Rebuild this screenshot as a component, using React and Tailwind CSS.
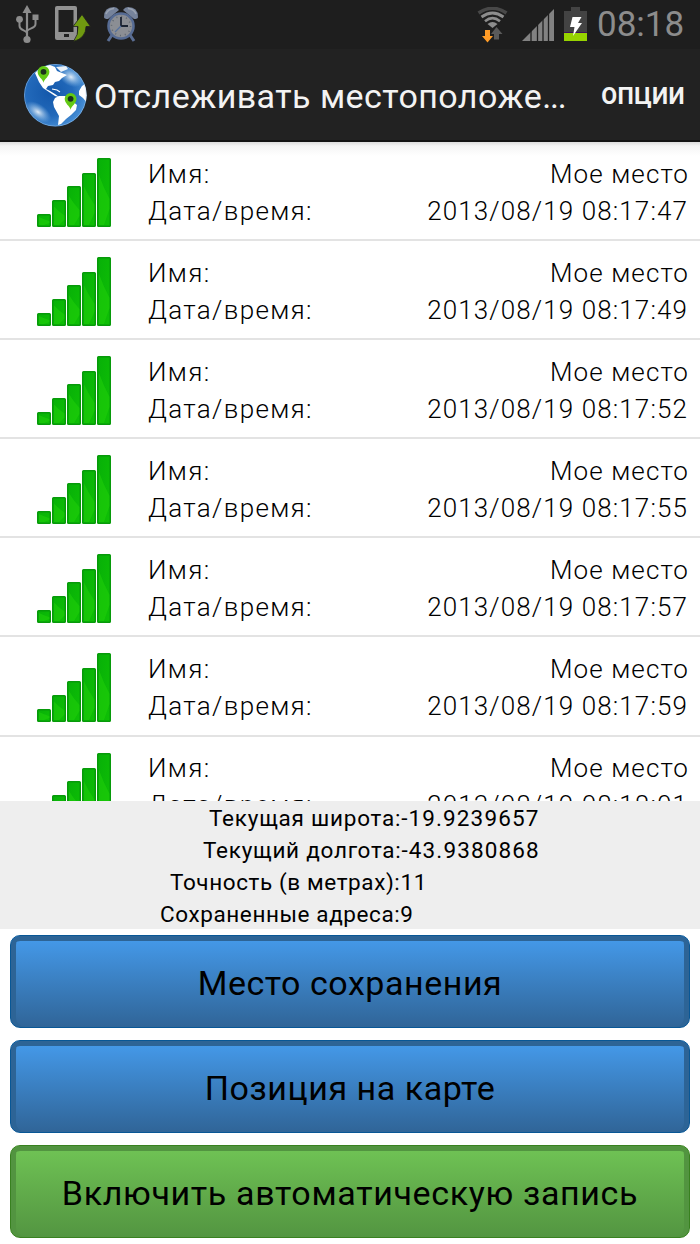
const places = [
  { id: 1, name: "Мое место", date: "2013/08/19 08:17:47" },
  { id: 2, name: "Мое место", date: "2013/08/19 08:17:49" },
  { id: 3, name: "Мое место", date: "2013/08/19 08:17:52" },
  { id: 4, name: "Мое место", date: "2013/08/19 08:17:55" },
  { id: 5, name: "Мое место", date: "2013/08/19 08:17:57" },
  { id: 6, name: "Мое место", date: "2013/08/19 08:17:59" },
  { id: 7, name: "Мое место", date: "2013/08/19 08:18:01" },
];

function UsbIcon() {
  return (
    <svg width="26" height="40" viewBox="0 0 26 40" fill="none">
      <path d="M12 34V8" stroke="#8c8c8c" strokeWidth="2.2" />
      <path d="M12 1L16.500 9H7.500z" fill="#8c8c8c" />
      <path
        d="M12 29C11 26 4.500 26.500 4.500 22V15M12 27C13 24 20.500 25 20.500 20V12"
        stroke="#8c8c8c"
        strokeWidth="2"
      />
      <circle cx="4.500" cy="15.300" r="3.400" fill="#8c8c8c" />
      <rect x="17.500" y="10.500" width="6" height="5.500" fill="#8c8c8c" />
      <circle cx="12" cy="35.500" r="3.600" fill="#8c8c8c" />
    </svg>
  );
}

function UploadIcon() {
  return (
    <svg width="36" height="36" viewBox="0 0 36 36" fill="none">
      <path d="M0 2Q0 0 2 0H20Q22 0 22 2V34H2Q0 34 0 32z" fill="#929292" />
      <path d="M3.500 4H18.500V26H3.500z" fill="#1e1e1e" />
      <rect x="9" y="28" width="5" height="3" fill="#222" />
      <path
        d="M27 8.500L35.500 20.500H31Q31 32 18.500 35.500Q23.500 29 23 20.500H18z"
        fill="#6f9a10"
        stroke="#1e1e1e"
        strokeWidth="0.800"
      />
    </svg>
  );
}

function AlarmIcon() {
  return (
    <svg width="36" height="38" viewBox="0 0 36 38" fill="none">
      <path d="M9 30L5 36M27 30L31 36" stroke="#5a6d92" strokeWidth="3" />
      <path d="M1 12Q1 2 11 2Q14 2 16 5L5 14Q1 14 1 12z" fill="#76839b" />
      <path d="M35 12Q35 2 25 2Q22 2 20 5L31 14Q35 14 35 12z" fill="#76839b" />
      <path d="M3 9Q5 4 11 3.500M33 9Q31 4 25 3.500" stroke="#9aa3b1" strokeWidth="1.500" />
      <circle cx="18" cy="21" r="12.500" fill="#8b8e94" stroke="#566b93" strokeWidth="2.600" />
      <circle
        cx="18"
        cy="21"
        r="9.500"
        stroke="#5f666f"
        strokeWidth="1.500"
        strokeDasharray="1 3.970"
      />
      <path d="M18 12V21H25" stroke="#1b2433" strokeWidth="1.800" />
      <path d="M18 21L12 27" stroke="#55719f" strokeWidth="1.200" />
    </svg>
  );
}

function WifiIcon() {
  return (
    <svg width="32" height="36" viewBox="0 0 32 36" fill="none">
      <path d="M1.500 6Q15.500 -3.500 29.500 6" stroke="#484848" strokeWidth="3.400" />
      <path d="M4.500 10Q15.500 2 26.500 10" stroke="#8d8d8d" strokeWidth="2.800" />
      <path d="M8 14.200Q15.500 8 23 14.200" stroke="#8d8d8d" strokeWidth="2.600" />
      <path d="M10.500 17Q15.500 12.800 20.500 17L15.500 21z" fill="#8d8d8d" />
      <path d="M19.500 20L25.500 27H22V32.500H17V27H14z" fill="#5a5a5a" />
      <path d="M8 23H13V29H16L10.500 35.500L5 29H8z" fill="#ff9c27" />
    </svg>
  );
}

function CellSignalIcon() {
  return (
    <svg width="33" height="33" viewBox="0 0 33 33">
      <path d="M0 32L32 0V32z" fill="#828282" />
      <path d="M9 20V33M15.500 14V33M21 8V33M26.500 2V33" stroke="#1e1e1e" strokeWidth="1.300" />
    </svg>
  );
}

function BatteryIcon() {
  return (
    <svg width="24" height="35" viewBox="0 0 24 35">
      <path d="M7 0H16V4H23V34H0V4H7z" fill="#434343" />
      <rect y="26" width="23" height="8" fill="#97d300" />
      <rect y="25" width="23" height="1" fill="#3d1159" />
      <path d="M8.500 10H17.500L14 16H18L9 29L10.500 20H6z" fill="#fff" />
    </svg>
  );
}

function Pin({ x, y }) {
  return (
    <g transform={`translate(${x} ${y})`}>
      <path
        d="M0 11C-0.800 7 -5.900 5 -5.900 0A5.900 5.900 0 0 1 5.900 0C5.900 5 0.800 7 0 11z"
        fill="#62c914"
      />
      <circle r="2.900" fill="#1c331c" />
    </g>
  );
}

function GlobeIcon() {
  return (
    <svg width="64" height="64" viewBox="0 0 64 64" className="shrink-0">
      <defs>
        <radialGradient id="sea" cx="0.400" cy="0.450" r="0.600">
          <stop offset="0" stopColor="#1458ab" />
          <stop offset="0.600" stopColor="#2269ba" />
          <stop offset="1" stopColor="#4c93d8" />
        </radialGradient>
        <radialGradient id="shine">
          <stop offset="0" stopColor="#fff" stopOpacity="0.850" />
          <stop offset="1" stopColor="#9fd0f5" stopOpacity="0" />
        </radialGradient>
        <clipPath id="disc">
          <circle cx="31.300" cy="31.300" r="31.300" />
        </clipPath>
      </defs>
      <g clipPath="url(#disc)">
        <rect width="64" height="64" fill="url(#sea)" />
        <ellipse cx="47" cy="13" rx="13" ry="9" fill="url(#shine)" transform="rotate(30 47 13)" />
        <ellipse cx="14" cy="48" rx="15" ry="8" fill="url(#shine)" transform="rotate(35 14 48)" />
        <path
          d="M11 9L17 3L26 1L31 3L33 7L38 9L43 11L38 14L35 17L31 18L29 21L24 22L22 25L26 27L31 30L35 33L31 32L25 28L19 24L15 18Z"
          fill="#fff"
        />
        <path d="M32 3L42 2L44 5L37 8z" fill="#fff" fillOpacity="0.900" />
        <path
          d="M31 34L35 32L41 32L48 37L53 41L52 46L47 51L42 55L37 60L34 61L35 52L30 43L29 38Z"
          fill="#fff"
        />
        <path d="M58 22L64 18V40L59 34L55 31L55 27z" fill="#fff" />
        <path d="M28 25L33 26L36 28" stroke="#fff" strokeWidth="1.100" fill="none" />
        <circle
          cx="31.300"
          cy="31.300"
          r="30.900"
          fill="none"
          stroke="#b7d3ee"
          strokeOpacity="0.450"
        />
      </g>
      <Pin x={19.5} y={7.8} />
      <Pin x={46.6} y={34.8} />
    </svg>
  );
}

function SignalBars() {
  const bars = [
    [0, 56],
    [15, 42],
    [30, 28],
    [45, 15],
    [60, 0],
  ];
  return (
    <svg width="75" height="69" viewBox="0 0 75 69">
      <defs>
        <linearGradient id="bar" x1="0" y1="0" x2="1" y2="1">
          <stop offset="0" stopColor="#07b008" />
          <stop offset="1" stopColor="#0fc005" />
        </linearGradient>
      </defs>
      {bars.map(([x, y]) => (
        <g key={x}>
          <rect
            x={x + 0.75}
            y={y + 0.75}
            width="12.500"
            height={67.5 - y}
            rx="0.800"
            fill="url(#bar)"
            stroke="#079a0a"
            strokeWidth="1.500"
          />
          <path
            d={`M${x + 2} ${y + (68 - y) * 0.25}Q${x + 6} ${y + (68 - y) * 0.42} ${x + 12.5} ${y + (68 - y) * 0.6}V${y + (68 - y) * 0.75}L${x + 7} 67H${x + 2}z`}
            fill="#25d40a"
            fillOpacity="0.450"
          />
        </g>
      ))}
    </svg>
  );
}

function StatusBar() {
  return (
    <div className="flex h-[49px] items-start bg-[#1e1e1e] pl-[15px]">
      <div className="pt-1">
        <UsbIcon />
      </div>
      <div className="pt-1.5 pl-3.5">
        <UploadIcon />
      </div>
      <div className="pt-[5px] pl-3">
        <AlarmIcon />
      </div>
      <div className="ml-auto pt-[7px]">
        <WifiIcon />
      </div>
      <div className="pt-[9px] pl-[13px]">
        <CellSignalIcon />
      </div>
      <div className="pt-[7px] pl-[9px]">
        <BatteryIcon />
      </div>
      <div className="w-[112px] pt-px pl-[9px] text-[35px] leading-[48px] text-[#8c8c8c]">
        08:18
      </div>
    </div>
  );
}

function PlaceRow({ place }) {
  return (
    <li className="flex h-[99.100px] shrink-0 border-b-2 border-[#e3e3e3] pr-[11px] pl-[37px] text-[26px] leading-[37px] font-light text-black">
      <div className="w-[111px] pt-4">
        <SignalBars />
      </div>
      <div className="grow pt-[13.500px]">
        <div className="flex justify-between">
          <span className="tracking-[1.400px]">Имя:</span>
          <span className="tracking-[1.100px]">{place.name}</span>
        </div>
        <div className="flex justify-between">
          <span className="tracking-[1.350px]">Дата/время:</span>
          <span className="pr-px tracking-[1.100px]">{place.date}</span>
        </div>
      </div>
    </li>
  );
}

export default function App() {
  return (
    <div className="flex h-[1244px] w-[700px] flex-col overflow-hidden bg-white font-[Roboto,sans-serif]">
      <StatusBar />
      <header className="flex h-[93px] shrink-0 items-center border-b-2 border-[#141414] bg-[#222] pt-[3px] pr-[15px] pl-6 text-[#f3f3f3]">
        <GlobeIcon />
        <h1 className="pt-px pl-1.5 text-[34px] tracking-[0.450px]">
          Отслеживать местоположе<span className="tracking-[-1.200px]">...</span>
        </h1>
        <span className="ml-auto pt-0.5 text-[23px] font-bold tracking-[0.400px]">ОПЦИИ</span>
      </header>

      <ul className="flex h-[659px] shrink-0 flex-col overflow-hidden bg-[linear-gradient(#dcdcdc,#f5f5f5_4px,#fff_14px)]">
        {places.map((place) => (
          <PlaceRow key={place.id} place={place} />
        ))}
      </ul>

      <div className="h-32 shrink-0 bg-[#eee] pt-px text-[22.500px] leading-8 text-black">
        <p className="pl-[209px] tracking-[0.770px]">
          Текущая широта:<span className="tracking-[1.120px]">-19.9239657</span>
        </p>
        <p className="pl-[203px] tracking-[0.740px]">
          Текущий долгота:<span className="tracking-[1.120px]">-43.9380868</span>
        </p>
        <p className="pl-[170px] tracking-[0.600px]">Точность (в метрах):11</p>
        <p className="pl-[160px] tracking-[0.600px]">Сохраненные адреса:9</p>
      </div>

      <div className="flex flex-col gap-3 px-2.5 pt-1.5 text-[34px] text-black">
        <button className="h-[93px] rounded-[10px] border border-[#085796] bg-linear-to-b from-[#459bec] to-[#306598] pt-1 tracking-[0.550px] shadow-[inset_0_5px_0_#2d6496,inset_5px_0_0_#2d6496,inset_-5px_0_0_#2d6496]">
          Место сохранения
        </button>
        <button className="h-[93px] rounded-[10px] border border-[#085796] bg-linear-to-b from-[#459bec] to-[#306598] pt-1 tracking-[0.550px] shadow-[inset_0_5px_0_#2d6496,inset_5px_0_0_#2d6496,inset_-5px_0_0_#2d6496]">
          Позиция на карте
        </button>
        <button className="h-[93px] rounded-[10px] border border-[#38811f] bg-linear-to-b from-[#70c455] to-[#539541] pt-1 tracking-[0.650px] shadow-[inset_0_5px_0_#529440,inset_5px_0_0_#529440,inset_-5px_0_0_#529440]">
          Включить автоматическую запись
        </button>
      </div>
    </div>
  );
}
